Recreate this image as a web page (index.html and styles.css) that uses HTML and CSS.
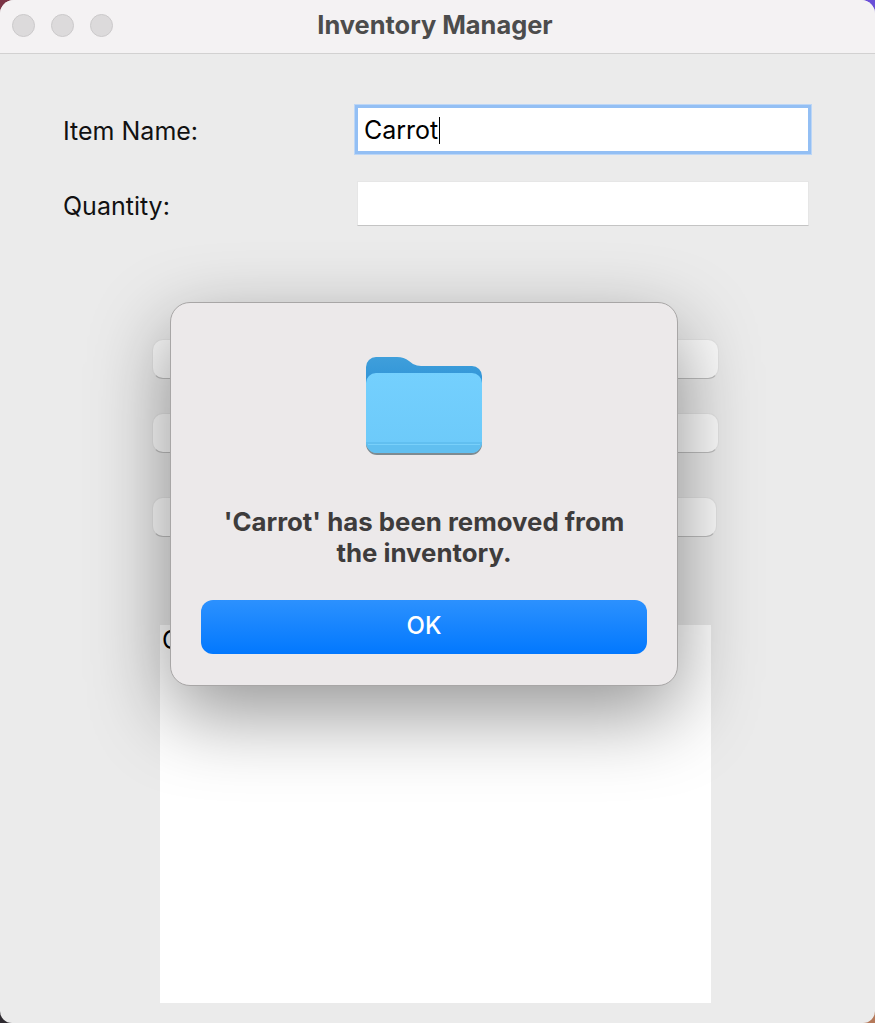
FILE: index.html
```html
<!DOCTYPE html>
<html lang="en">

<head>
    <meta charset="UTF-8">
    <meta name="viewport" content="width=device-width, initial-scale=1.0">
    <title>Inventory Manager</title>
    <link rel="stylesheet" href="styles.css">
</head>

<body>
    <div class="window">
        <div class="titlebar">
            <div class="lights">
                <span class="light"></span>
                <span class="light"></span>
                <span class="light"></span>
            </div>
            <h1>Inventory Manager</h1>
        </div>

        <div class="main-content">
            <div class="form">
                <label>Item Name:</label>
                <div class="field focused">Carrot<span class="caret"></span></div>
                <label>Quantity:</label>
                <div class="field"></div>
            </div>

            <div class="actions">
                <button class="action"></button>
                <button class="action"></button>
                <button class="action last"></button>
            </div>

            <div class="list">C</div>
        </div>

        <div class="dialog">
            <svg class="folder" viewBox="0 0 116 100" width="116" height="100">
                <defs>
                    <linearGradient id="front" x1="0" y1="0" x2="0" y2="1">
                        <stop offset="0" stop-color="#74d0fe" />
                        <stop offset="1" stop-color="#6cc9f9" />
                    </linearGradient>
                    <linearGradient id="back" x1="0" y1="0" x2="0" y2="1">
                        <stop offset="0" stop-color="#3f9fdb" />
                        <stop offset="1" stop-color="#2a8fd6" />
                    </linearGradient>
                </defs>
                <!-- back with tab -->
                <path d="M0 11 A10 10 0 0 1 10 1 H31 Q38 1 43 5 L47 8 Q51 10 55 10 H106 A10 10 0 0 1 116 20 V40 H0 Z" fill="url(#back)" />
                <!-- soft edge under the folder -->
                <path d="M0 30 H116 V88 A11 11 0 0 1 105 99 H11 A11 11 0 0 1 0 88 Z" fill="#7d8b92" />
                <!-- front panel -->
                <path d="M0 27 A10 10 0 0 1 10 17 H106 A10 10 0 0 1 116 27 V86 A11 11 0 0 1 105 97 H11 A11 11 0 0 1 0 86 Z" fill="url(#front)" />
                <path d="M0 86 H116 A11 11 0 0 1 105 97 H11 A11 11 0 0 1 0 86 Z" fill="#61bff0" />
                <path d="M2 88.5 H114" stroke="#78d0fa" stroke-width="1" />
            </svg>
            <p class="message">'Carrot' has been removed from the inventory.</p>
            <button class="ok-btn">OK</button>
        </div>
    </div>
</body>

</html>
```

FILE: styles.css
```css
html,
body {
    margin: 0;
    height: 100%;
    font-family: 'Inter', 'Liberation Sans', sans-serif;
}

body {
    background:
        linear-gradient(to right, #7a3345 50%, #6a4fd8 50%) top / 100% 50% no-repeat,
        linear-gradient(to right, #2e2a30 50%, #b5795a 50%) bottom / 100% 50% no-repeat;
}

.window {
    position: relative;
    height: 1023px;
    background: #ebebeb;
    border-radius: 14px 14px 12px 12px;
    overflow: hidden;
}

.titlebar {
    display: flex;
    align-items: center;
    justify-content: center;
    position: relative;
    box-sizing: border-box;
    height: 54px;
    padding: 0 5px 5px 0;
    background: #f4f2f3;
    border-bottom: 1px solid #d2d1d1;
}

.titlebar h1 {
    margin: 0;
    font-size: 25.4px;
    font-weight: 700;
    color: #4c4c4c;
}

.lights {
    display: flex;
    gap: 16px;
    position: absolute;
    left: 12px;
    top: 14px;
}

.light {
    width: 21px;
    height: 21px;
    border: 1px solid #cbc9ca;
    border-radius: 50%;
    background: #dcdadb;
}

.main-content {
    display: flex;
    flex-direction: column;
}

.form {
    display: grid;
    grid-template-columns: 292px 456px;
    grid-template-rows: 48px 45px;
    row-gap: 28px;
    align-items: center;
    margin: 51px 0 0 63px;
    font-size: 25px;
    color: #111;
}

.form label {
    padding-top: 4px;
}

.field {
    display: flex;
    align-items: center;
    box-sizing: border-box;
    height: 45px;
    margin: 0 2px;
    padding: 2px 0 0 6px;
    background: #fff;
    border: 1px solid #e6e6e6;
    border-bottom-color: #c4c4c4;
    color: #000;
}

.field.focused {
    height: 43px;
    margin: 0 3px;
    padding-left: 6px;
    border: 0;
    outline: 3px solid #93bff4;
    box-shadow: 0 0 0 4px #bcd6f6;
}

.caret {
    width: 1px;
    height: 27px;
    margin-left: 1px;
    background: #000;
}

.actions {
    display: flex;
    flex-direction: column;
    align-items: flex-start;
    margin: 113px 0 0 152px;
    gap: 34px;
}

.action {
    box-sizing: border-box;
    width: 567px;
    height: 40px;
    padding: 0;
    background: #fbfbfb;
    border: 1px solid #e4e4e4;
    border-bottom-color: #bebebe;
    border-radius: 11px;
}

.action.last {
    width: 565px;
    margin-top: 10px;
}

.list {
    box-sizing: border-box;
    width: 551px;
    height: 378px;
    margin: 88px 0 0 160px;
    padding: 0 2px;
    background: #fff;
    font-size: 25px;
    line-height: 30px;
    color: #000;
}

/* alert sheet sits over the window */
.dialog {
    display: flex;
    flex-direction: column;
    align-items: center;
    position: absolute;
    left: 170px;
    top: 302px;
    box-sizing: border-box;
    width: 508px;
    height: 384px;
    padding: 53px 30px 0;
    background: #ece9ea;
    border: 1px solid #a8a6a6;
    border-radius: 20px;
    box-shadow: 0 28px 80px rgba(0, 0, 0, 0.42);
}

.folder {
    display: block;
}

.message {
    margin: 50px 0 0;
    font-size: 25.8px;
    font-weight: 700;
    line-height: 31px;
    text-align: center;
    color: #3e3c3c;
}

.ok-btn {
    width: 446px;
    height: 54px;
    margin-top: 32px;
    padding: 0 0 3px;
    background: linear-gradient(#2c91fe, #0278fe);
    border: none;
    border-radius: 12px;
    font-family: inherit;
    font-size: 24px;
    font-weight: 500;
    color: #fff;
}
```
